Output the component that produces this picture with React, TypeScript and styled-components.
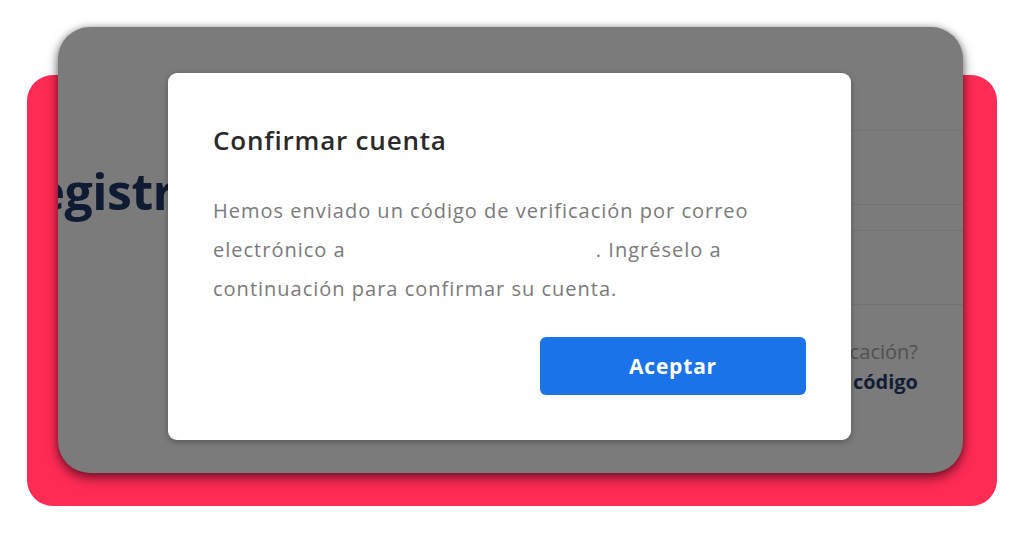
import React from "react";
import styled, { createGlobalStyle } from "styled-components";

const GlobalStyle = createGlobalStyle`
  html, body {
    margin: 0;
    padding: 0;
    background: #ffffff;
  }
  body {
    font-family: "Open Sans", "Noto Sans", sans-serif;
  }
`;

const App: React.FC = () => {
  return (
    <>
      <GlobalStyle />
      <Stage>
        <RedCard />
        <ScreenCard>
          <PageLayer>
            <LeftCol>
              <Heading>Registro</Heading>
            </LeftCol>
            <RightCol>
              <FakeInput />
              <FakeInput />
              <Links>
                <MutedText>¿No recibiste el código de verificación?</MutedText>
                <StrongText>Reenviar código</StrongText>
              </Links>
            </RightCol>
          </PageLayer>
          <Modal>
            <ModalTitle>Confirmar cuenta</ModalTitle>
            <ModalBody>
              Hemos enviado un código de verificación por correo
              <br />
              electrónico a <EmailGap />. Ingréselo a
              <br />
              continuación para confirmar su cuenta.
            </ModalBody>
            <ButtonRow>
              <Button>Aceptar</Button>
            </ButtonRow>
          </Modal>
        </ScreenCard>
      </Stage>
    </>
  );
};

export default App;

const Stage = styled.div`
  width: 1024px;
  height: 536px;
  display: grid;
  grid-template-columns: 1fr;
  grid-template-rows: 1fr;
  overflow: hidden;
  background: #ffffff;
`;

const RedCard = styled.div`
  grid-area: 1 / 1;
  align-self: start;
  margin: 75px 27px 0 27px;
  height: 431px;
  background: #fe2b55;
  border-radius: 26px;
`;

const ScreenCard = styled.div`
  grid-area: 1 / 1;
  align-self: start;
  justify-self: start;
  margin: 27px 0 0 58px;
  width: 905px;
  height: 446px;
  border-radius: 32px;
  background: #7b7b7b;
  box-shadow: 0 5px 12px rgba(20, 0, 10, 0.55), 0 0 6px rgba(0, 0, 0, 0.25);
  overflow: hidden;
  display: grid;
  grid-template-columns: 1fr;
  grid-template-rows: 1fr;
`;

const PageLayer = styled.div`
  grid-area: 1 / 1;
  display: flex;
  justify-content: space-between;
  min-width: 0;
`;

const LeftCol = styled.div`
  padding-top: 134px;
  margin-left: -55px;
`;

const Heading = styled.h1`
  margin: 0;
  font-size: 50px;
  line-height: 60px;
  font-weight: 700;
  color: #0f1a33;
  white-space: nowrap;
  letter-spacing: -0.5px;
`;

const RightCol = styled.div`
  flex-shrink: 0;
  width: 520px;
  margin-right: -40px;
  padding-top: 103px;
  display: flex;
  flex-direction: column;
  gap: 25px;
`;

const FakeInput = styled.div`
  height: 73px;
  border: 1px solid #727274;
  border-radius: 4px;
`;

const Links = styled.div`
  margin-top: 7px;
  padding-right: 85px;
  display: flex;
  flex-direction: column;
  align-items: flex-end;
  font-size: 20px;
  line-height: 30px;
  white-space: nowrap;
`;

const MutedText = styled.span`
  color: #505050;
`;

const StrongText = styled.span`
  color: #131d36;
  font-weight: 700;
`;

const Modal = styled.div`
  grid-area: 1 / 1;
  align-self: start;
  justify-self: start;
  margin: 46px 0 0 110px;
  width: 683px;
  box-sizing: border-box;
  padding: 52px 45px 45px 45px;
  background: #ffffff;
  border-radius: 9px;
  box-shadow: 0 2px 6px rgba(0, 0, 0, 0.3);
`;

const ModalTitle = styled.h2`
  margin: 0;
  font-size: 26px;
  line-height: 30px;
  font-weight: 600;
  letter-spacing: 0.8px;
  color: #2a2a2a;
`;

const ModalBody = styled.p`
  margin: 36px 0 0 0;
  font-size: 20px;
  line-height: 39px;
  letter-spacing: 1px;
  color: #7a7a7a;
  white-space: nowrap;
`;

const EmailGap = styled.span`
  display: inline-block;
  width: 244px;
`;

const ButtonRow = styled.div`
  margin-top: 29px;
  display: flex;
  justify-content: flex-end;
`;

const Button = styled.button`
  width: 266px;
  height: 58px;
  border: none;
  border-radius: 6px;
  background: #1a73e8;
  color: #ffffff;
  font-family: "Open Sans", "Noto Sans", sans-serif;
  font-size: 21px;
  font-weight: 700;
  letter-spacing: 0.8px;
  cursor: pointer;
`;
